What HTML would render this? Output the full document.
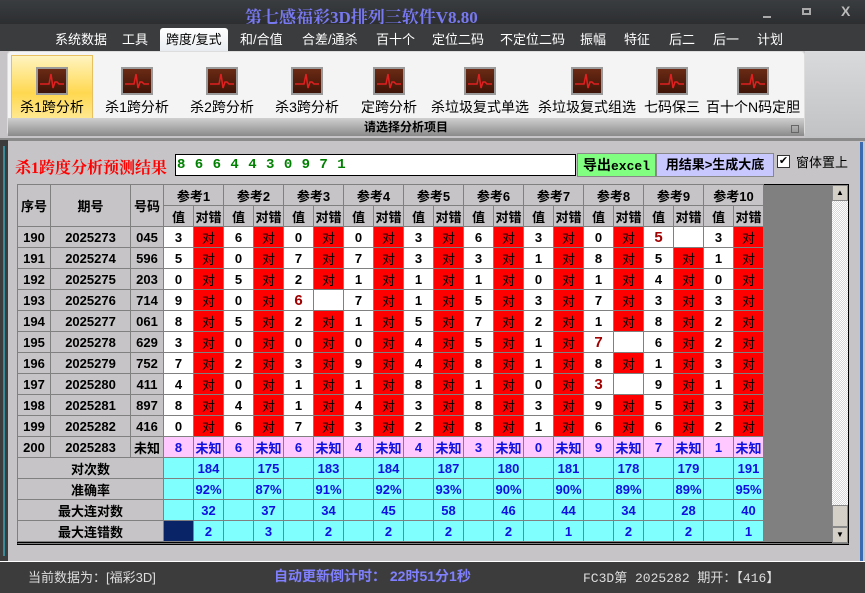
<!DOCTYPE html>
<html><head><meta charset="utf-8"><style>
*{margin:0;padding:0;box-sizing:border-box}
body{width:865px;height:593px;overflow:hidden;background:#c6c4c6;font-family:"Liberation Sans","Noto Sans CJK SC",sans-serif;position:relative}
.a{position:absolute}
#title{left:0;top:0;width:865px;height:24px;background:linear-gradient(#3a3d40,#2c2e30)}
#menu{left:0;top:24px;width:865px;height:27px;background:#3b3c3e}
.m{position:absolute;top:29px;color:#fff;font-size:13px;white-space:nowrap}
#rib{left:7px;top:51px;width:798px;height:85px;background:#f4f4f4;border-radius:4px;border:1px solid #ddd}
#ribr{left:805px;top:51px;width:60px;height:87px;background:linear-gradient(#d8dadc,#c0c2c4)}
#ribbar{left:8px;top:118px;width:796px;height:18px;background:linear-gradient(#d0d0d0,#8a8a8a);font-weight:bold;font-size:12px;text-align:center;line-height:18px;color:#000}
.it{position:absolute;top:54px;height:66px;text-align:center;font-size:14px;color:#000;white-space:nowrap}
.ic{width:32px;height:28px;margin:13px auto 2px;background:linear-gradient(#6a2a14,#3e1408);border:2px solid #9a9a9a;position:relative}
.ic svg{position:absolute;left:0;top:0}
#sel{left:11px;top:55px;width:82px;height:64px;background:linear-gradient(#fff4c0,#ffd850 60%,#ffe890);border:1px solid #e8c060}
#left{left:0;top:140px;width:8px;height:422px;background:#3c3c3c}
#status{left:0;top:562px;width:865px;height:31px;background:#3c3c3c;font-size:13px}
table{border-collapse:collapse;table-layout:fixed;position:absolute;left:17px;top:184px;font-size:13px;font-weight:bold}
td{border:1px solid #808080;height:21px;text-align:center;padding:0;overflow:hidden;white-space:nowrap}
.g{background:#c6c4c6;color:#000}
.w{background:#fff;color:#000}
.r{background:#ff0000;color:#000;font-weight:normal}
.x{background:#fff;color:#a00000;font-size:15px}
.p{background:#ffc8ff;color:#1010e0}
.c{background:#80ffff;color:#1010e0}
</style></head><body>
<div class="a" id="title"></div>
<div class="a" style="left:245px;top:3px;font-family:'Liberation Serif','Noto Serif CJK SC',serif;font-size:17px;font-weight:bold;color:#7878f0">第七感福彩3D排列三软件V8.80</div>
<div class="a" style="left:763px;top:16px;width:8px;height:2px;background:#aaa"></div>
<div class="a" style="left:802px;top:8px;width:9px;height:7px;border:2px solid #aaa"></div>
<div class="a" style="left:841px;top:3px;color:#bbb;font-weight:bold;font-size:14px">X</div>
<div class="a" id="menu"></div>
<div class="a" style="left:160px;top:28px;width:68px;height:24px;background:linear-gradient(#fff,#e8ecf0);border-radius:3px 3px 0 0"></div>
<div class="m" style="left:55px">系统数据</div><div class="m" style="left:122px">工具</div>
<div class="m" style="left:166px;color:#000">跨度/复式</div><div class="m" style="left:240px">和/合值</div>
<div class="m" style="left:302px">合差/通杀</div><div class="m" style="left:376px">百十个</div>
<div class="m" style="left:432px">定位二码</div><div class="m" style="left:500px">不定位二码</div>
<div class="m" style="left:580px">振幅</div><div class="m" style="left:624px">特征</div>
<div class="m" style="left:669px">后二</div><div class="m" style="left:713px">后一</div><div class="m" style="left:757px">计划</div>
<div class="a" id="rib"></div><div class="a" id="ribr"></div>
<div class="a" id="sel"></div>
<div class="a" id="ribbar">请选择分析项目</div>
<div class="a" style="left:791px;top:125px;width:8px;height:8px;border:1px solid #666"></div>
<div class="it" style="left:12px;width:80px"><div class="ic"><svg width="28" height="24"><path d="M2 15H11L13 5L15 19L17 13H19L21 15H26" stroke="#e02020" stroke-width="1.5" fill="none"/></svg></div>杀1跨分析</div>
<div class="it" style="left:97px;width:80px"><div class="ic"><svg width="28" height="24"><path d="M2 15H11L13 5L15 19L17 13H19L21 15H26" stroke="#e02020" stroke-width="1.5" fill="none"/></svg></div>杀1跨分析</div>
<div class="it" style="left:182px;width:80px"><div class="ic"><svg width="28" height="24"><path d="M2 15H11L13 5L15 19L17 13H19L21 15H26" stroke="#e02020" stroke-width="1.5" fill="none"/></svg></div>杀2跨分析</div>
<div class="it" style="left:267px;width:80px"><div class="ic"><svg width="28" height="24"><path d="M2 15H11L13 5L15 19L17 13H19L21 15H26" stroke="#e02020" stroke-width="1.5" fill="none"/></svg></div>杀3跨分析</div>
<div class="it" style="left:349px;width:80px"><div class="ic"><svg width="28" height="24"><path d="M2 15H11L13 5L15 19L17 13H19L21 15H26" stroke="#e02020" stroke-width="1.5" fill="none"/></svg></div>定跨分析</div>
<div class="it" style="left:430px;width:100px"><div class="ic"><svg width="28" height="24"><path d="M2 15H11L13 5L15 19L17 13H19L21 15H26" stroke="#e02020" stroke-width="1.5" fill="none"/></svg></div>杀垃圾复式单选</div>
<div class="it" style="left:537px;width:100px"><div class="ic"><svg width="28" height="24"><path d="M2 15H11L13 5L15 19L17 13H19L21 15H26" stroke="#e02020" stroke-width="1.5" fill="none"/></svg></div>杀垃圾复式组选</div>
<div class="it" style="left:637px;width:70px"><div class="ic"><svg width="28" height="24"><path d="M2 15H11L13 5L15 19L17 13H19L21 15H26" stroke="#e02020" stroke-width="1.5" fill="none"/></svg></div>七码保三</div>
<div class="it" style="left:706px;width:94px"><div class="ic"><svg width="28" height="24"><path d="M2 15H11L13 5L15 19L17 13H19L21 15H26" stroke="#e02020" stroke-width="1.5" fill="none"/></svg></div>百十个N码定胆</div>
<div class="a" style="left:0;top:138px;width:865px;height:3px;background:#8a8a8a"></div>
<div class="a" id="left"></div>
<div class="a" style="left:3px;top:146px;width:2px;height:410px;background:#3a8a9a"></div>
<div class="a" style="left:860px;top:142px;width:3px;height:420px;background:#3a6ab0"></div>
<div class="a" style="left:15px;top:155px;color:#f00;font-weight:bold;font-size:16px;font-family:'Liberation Serif','Noto Serif CJK SC',serif">杀1跨度分析预测结果</div>
<div class="a" style="left:175px;top:154px;width:401px;height:22px;background:#fff;border:1px solid #000;color:#008000;font-family:'Liberation Mono',monospace;font-weight:bold;font-size:14px;line-height:20px;padding-left:1px;word-spacing:1px">8 6 6 4 4 3 0 9 7 1</div>
<div class="a" style="left:577px;top:153px;width:79px;height:24px;background:#80ff80;border:1px solid #888;font-weight:bold;font-size:14px;line-height:22px;text-align:center">导出<span style="font-family:'Liberation Mono',monospace;font-size:13px">excel</span></div>
<div class="a" style="left:656px;top:153px;width:118px;height:24px;background:#c8c8ff;border:1px solid #888;font-weight:bold;font-size:13px;line-height:22px;text-align:center">用结果&gt;生成大底</div>
<div class="a" style="left:777px;top:155px;width:13px;height:13px;background:#fff;border:1px solid #333;font-size:11px;line-height:11px;text-align:center">✔</div>
<div class="a" style="left:796px;top:152px;font-size:13px">窗体置上</div>
<div class="a" style="left:17px;top:184px;width:832px;height:361px;background:#808080;border:1px solid #000;border-bottom:3px double #000"></div>
<div class="a" style="left:832px;top:185px;width:16px;height:357px;background:repeating-conic-gradient(#fff 0 25%,#d8d8d8 0 50%) 0 0/2px 2px"></div>
<div class="a" style="left:832px;top:185px;width:16px;height:16px;background:#d4d0c8;border:1px solid #888;font-size:8px;text-align:center;line-height:14px">▲</div>
<div class="a" style="left:832px;top:505px;width:16px;height:22px;background:#d4d0c8;border:1px solid #888"></div>
<div class="a" style="left:832px;top:527px;width:16px;height:16px;background:#d4d0c8;border:1px solid #888;font-size:8px;text-align:center;line-height:14px">▼</div>
<table>
<colgroup><col style="width:33px"><col style="width:80px"><col style="width:33px"><col span="20" style="width:30px"></colgroup>
<tr class="g"><td rowspan="2" class="g">序号</td><td rowspan="2" class="g">期号</td><td rowspan="2" class="g">号码</td><td colspan="2" class="g">参考1</td><td colspan="2" class="g">参考2</td><td colspan="2" class="g">参考3</td><td colspan="2" class="g">参考4</td><td colspan="2" class="g">参考5</td><td colspan="2" class="g">参考6</td><td colspan="2" class="g">参考7</td><td colspan="2" class="g">参考8</td><td colspan="2" class="g">参考9</td><td colspan="2" class="g">参考10</td></tr>
<tr class="g"><td>值</td><td>对错</td><td>值</td><td>对错</td><td>值</td><td>对错</td><td>值</td><td>对错</td><td>值</td><td>对错</td><td>值</td><td>对错</td><td>值</td><td>对错</td><td>值</td><td>对错</td><td>值</td><td>对错</td><td>值</td><td>对错</td></tr>
<tr><td class="g">190</td><td class="g">2025273</td><td class="g">045</td><td class="w">3</td><td class="r">对</td><td class="w">6</td><td class="r">对</td><td class="w">0</td><td class="r">对</td><td class="w">0</td><td class="r">对</td><td class="w">3</td><td class="r">对</td><td class="w">6</td><td class="r">对</td><td class="w">3</td><td class="r">对</td><td class="w">0</td><td class="r">对</td><td class="x">5</td><td class="w"></td><td class="w">3</td><td class="r">对</td></tr>
<tr><td class="g">191</td><td class="g">2025274</td><td class="g">596</td><td class="w">5</td><td class="r">对</td><td class="w">0</td><td class="r">对</td><td class="w">7</td><td class="r">对</td><td class="w">7</td><td class="r">对</td><td class="w">3</td><td class="r">对</td><td class="w">3</td><td class="r">对</td><td class="w">1</td><td class="r">对</td><td class="w">8</td><td class="r">对</td><td class="w">5</td><td class="r">对</td><td class="w">1</td><td class="r">对</td></tr>
<tr><td class="g">192</td><td class="g">2025275</td><td class="g">203</td><td class="w">0</td><td class="r">对</td><td class="w">5</td><td class="r">对</td><td class="w">2</td><td class="r">对</td><td class="w">1</td><td class="r">对</td><td class="w">1</td><td class="r">对</td><td class="w">1</td><td class="r">对</td><td class="w">0</td><td class="r">对</td><td class="w">1</td><td class="r">对</td><td class="w">4</td><td class="r">对</td><td class="w">0</td><td class="r">对</td></tr>
<tr><td class="g">193</td><td class="g">2025276</td><td class="g">714</td><td class="w">9</td><td class="r">对</td><td class="w">0</td><td class="r">对</td><td class="x">6</td><td class="w"></td><td class="w">7</td><td class="r">对</td><td class="w">1</td><td class="r">对</td><td class="w">5</td><td class="r">对</td><td class="w">3</td><td class="r">对</td><td class="w">7</td><td class="r">对</td><td class="w">3</td><td class="r">对</td><td class="w">3</td><td class="r">对</td></tr>
<tr><td class="g">194</td><td class="g">2025277</td><td class="g">061</td><td class="w">8</td><td class="r">对</td><td class="w">5</td><td class="r">对</td><td class="w">2</td><td class="r">对</td><td class="w">1</td><td class="r">对</td><td class="w">5</td><td class="r">对</td><td class="w">7</td><td class="r">对</td><td class="w">2</td><td class="r">对</td><td class="w">1</td><td class="r">对</td><td class="w">8</td><td class="r">对</td><td class="w">2</td><td class="r">对</td></tr>
<tr><td class="g">195</td><td class="g">2025278</td><td class="g">629</td><td class="w">3</td><td class="r">对</td><td class="w">0</td><td class="r">对</td><td class="w">0</td><td class="r">对</td><td class="w">0</td><td class="r">对</td><td class="w">4</td><td class="r">对</td><td class="w">5</td><td class="r">对</td><td class="w">1</td><td class="r">对</td><td class="x">7</td><td class="w"></td><td class="w">6</td><td class="r">对</td><td class="w">2</td><td class="r">对</td></tr>
<tr><td class="g">196</td><td class="g">2025279</td><td class="g">752</td><td class="w">7</td><td class="r">对</td><td class="w">2</td><td class="r">对</td><td class="w">3</td><td class="r">对</td><td class="w">9</td><td class="r">对</td><td class="w">4</td><td class="r">对</td><td class="w">8</td><td class="r">对</td><td class="w">1</td><td class="r">对</td><td class="w">8</td><td class="r">对</td><td class="w">1</td><td class="r">对</td><td class="w">3</td><td class="r">对</td></tr>
<tr><td class="g">197</td><td class="g">2025280</td><td class="g">411</td><td class="w">4</td><td class="r">对</td><td class="w">0</td><td class="r">对</td><td class="w">1</td><td class="r">对</td><td class="w">1</td><td class="r">对</td><td class="w">8</td><td class="r">对</td><td class="w">1</td><td class="r">对</td><td class="w">0</td><td class="r">对</td><td class="x">3</td><td class="w"></td><td class="w">9</td><td class="r">对</td><td class="w">1</td><td class="r">对</td></tr>
<tr><td class="g">198</td><td class="g">2025281</td><td class="g">897</td><td class="w">8</td><td class="r">对</td><td class="w">4</td><td class="r">对</td><td class="w">1</td><td class="r">对</td><td class="w">4</td><td class="r">对</td><td class="w">3</td><td class="r">对</td><td class="w">8</td><td class="r">对</td><td class="w">3</td><td class="r">对</td><td class="w">9</td><td class="r">对</td><td class="w">5</td><td class="r">对</td><td class="w">3</td><td class="r">对</td></tr>
<tr><td class="g">199</td><td class="g">2025282</td><td class="g">416</td><td class="w">0</td><td class="r">对</td><td class="w">6</td><td class="r">对</td><td class="w">7</td><td class="r">对</td><td class="w">3</td><td class="r">对</td><td class="w">2</td><td class="r">对</td><td class="w">8</td><td class="r">对</td><td class="w">1</td><td class="r">对</td><td class="w">6</td><td class="r">对</td><td class="w">6</td><td class="r">对</td><td class="w">2</td><td class="r">对</td></tr>
<tr><td class="g">200</td><td class="g">2025283</td><td class="g">未知</td><td class="p">8</td><td class="p">未知</td><td class="p">6</td><td class="p">未知</td><td class="p">6</td><td class="p">未知</td><td class="p">4</td><td class="p">未知</td><td class="p">4</td><td class="p">未知</td><td class="p">3</td><td class="p">未知</td><td class="p">0</td><td class="p">未知</td><td class="p">9</td><td class="p">未知</td><td class="p">7</td><td class="p">未知</td><td class="p">1</td><td class="p">未知</td></tr>
<tr><td colspan="3" class="g">对次数</td><td class="c"></td><td class="c">184</td><td class="c"></td><td class="c">175</td><td class="c"></td><td class="c">183</td><td class="c"></td><td class="c">184</td><td class="c"></td><td class="c">187</td><td class="c"></td><td class="c">180</td><td class="c"></td><td class="c">181</td><td class="c"></td><td class="c">178</td><td class="c"></td><td class="c">179</td><td class="c"></td><td class="c">191</td></tr>
<tr><td colspan="3" class="g">准确率</td><td class="c"></td><td class="c">92%</td><td class="c"></td><td class="c">87%</td><td class="c"></td><td class="c">91%</td><td class="c"></td><td class="c">92%</td><td class="c"></td><td class="c">93%</td><td class="c"></td><td class="c">90%</td><td class="c"></td><td class="c">90%</td><td class="c"></td><td class="c">89%</td><td class="c"></td><td class="c">89%</td><td class="c"></td><td class="c">95%</td></tr>
<tr><td colspan="3" class="g">最大连对数</td><td class="c"></td><td class="c">32</td><td class="c"></td><td class="c">37</td><td class="c"></td><td class="c">34</td><td class="c"></td><td class="c">45</td><td class="c"></td><td class="c">58</td><td class="c"></td><td class="c">46</td><td class="c"></td><td class="c">44</td><td class="c"></td><td class="c">34</td><td class="c"></td><td class="c">28</td><td class="c"></td><td class="c">40</td></tr>
<tr><td colspan="3" class="g">最大连错数</td><td class="c" style="background:#0a2468"></td><td class="c">2</td><td class="c"></td><td class="c">3</td><td class="c"></td><td class="c">2</td><td class="c"></td><td class="c">2</td><td class="c"></td><td class="c">2</td><td class="c"></td><td class="c">2</td><td class="c"></td><td class="c">1</td><td class="c"></td><td class="c">2</td><td class="c"></td><td class="c">2</td><td class="c"></td><td class="c">1</td></tr>
</table>
<div class="a" id="status"></div>
<div class="a" style="left:0;top:561px;width:865px;height:1px;background:#fff"></div>
<div class="a" style="left:28px;top:567px;color:#ddd;font-size:13px">当前数据为：[福彩3D]</div>
<div class="a" style="left:274px;top:566px;color:#8080ff;font-size:14px;font-weight:bold">自动更新倒计时：&nbsp;22时51分1秒</div>
<div class="a" style="left:583px;top:567px;color:#ddd;font-size:13px;font-family:'Liberation Mono','Noto Sans CJK SC',monospace">FC3D第 2025282 期开：【416】</div>
</body></html>
